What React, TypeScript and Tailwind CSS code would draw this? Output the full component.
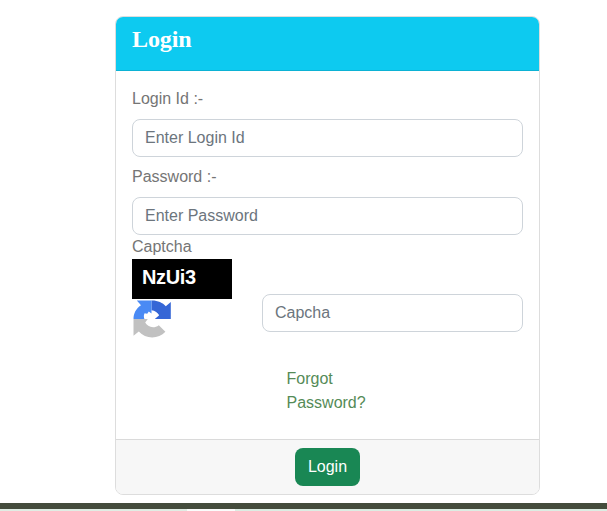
import { useState } from "react";
import type { FormEvent } from "react";

const inputClass =
  "block h-[38px] w-full rounded-lg border border-[#ced4da] bg-white px-3 text-base text-[#212529] placeholder:text-[#6c757d] placeholder:opacity-100 focus:outline-none focus:border-[#86b7fe]";

function RefreshIcon() {
  return (
    <svg width="40" height="40" viewBox="0 0 40 40" aria-hidden="true">
      {/* Right arrow */}
      <path
        d="M19.5 1.5C25.5 1.3 30.5 3.6 33.8 7.2L38.8 3V20H22.8L27.2 16.2C25.8 13.6 23 11.6 19.5 11.2Z"
        fill="#3566d6"
      />
      {/* Left arrow */}
      <path
        d="M4.8 1.5H19.5V14.5L16.8 12.6L15.2 14.8L12.6 14.2C11.6 16 11.7 18 12.4 20H1.5C1.5 14.6 3.9 9.7 9 6.3Z"
        fill="#4a8af4"
      />
      {/* Bottom arrow */}
      <path
        d="M1.5 20H15.8L13.2 23.6C15.2 27.6 21.4 30.2 26.8 26.2L33.4 32.8C26.4 40.4 13.6 40.3 6.8 32.6L1.5 36.8Z"
        fill="#c1c1c1"
      />
    </svg>
  );
}

export default function App() {
  const [loginId, setLoginId] = useState("");
  const [password, setPassword] = useState("");
  const [captcha, setCaptcha] = useState("");

  const handleSubmit = (e: FormEvent) => {
    e.preventDefault();
  };

  return (
    <div className="flex h-screen flex-col overflow-hidden bg-white pt-4 font-['Liberation_Sans',Arial,sans-serif] text-base text-[#757575]">
      <form
        onSubmit={handleSubmit}
        className="ml-[115px] w-[425px] shrink-0 overflow-hidden rounded-lg border border-[#dddddd] bg-white"
      >
        {/* Header */}
        <div className="h-[54px] border-b border-[#0cb2d4] bg-[#0dcaf0] px-4 pt-2">
          <h4 className="font-['Liberation_Serif','Times_New_Roman',serif] text-2xl leading-[29px] font-bold tracking-[-0.1px] text-white">
            Login
          </h4>
        </div>

        {/* Body */}
        <div className="h-[368px] p-4">
          <label htmlFor="loginId" className="mb-2 block">
            Login Id :-
          </label>
          <input
            id="loginId"
            type="text"
            placeholder="Enter Login Id"
            value={loginId}
            onChange={(e) => setLoginId(e.target.value)}
            className={inputClass}
          />
          <label htmlFor="password" className="mt-2 mb-2 block">
            Password :-
          </label>
          <input
            id="password"
            type="password"
            placeholder="Enter Password"
            value={password}
            onChange={(e) => setPassword(e.target.value)}
            className={inputClass}
          />

          <div className="flex">
            <div className="w-[130px] shrink-0">
              <label htmlFor="captcha" className="block">
                Captcha
              </label>
              <div className="h-10 w-[100px] bg-black pl-[10px] text-[20px] leading-[36px] font-bold tracking-[-0.35px] text-white">
                NzUi3
              </div>
              <button type="button" aria-label="Refresh captcha" className="block">
                <RefreshIcon />
              </button>
            </div>
            <div className="flex-1 pt-[59px]">
              <input
                id="captcha"
                type="text"
                placeholder="Capcha"
                value={captcha}
                onChange={(e) => setCaptcha(e.target.value)}
                className={inputClass}
              />
            </div>
          </div>

          <a href="#" className="mt-7 ml-[154.5px] block w-[90px] text-[#558b57]">
            Forgot Password?
          </a>
        </div>

        {/* Footer */}
        <div className="flex justify-center border-t border-[#dadada] bg-[#f7f7f7] py-2">
          <button
            type="submit"
            className="h-[38px] w-[65px] rounded-lg bg-[#198754] text-white"
          >
            Login
          </button>
        </div>
      </form>

      {/* Page footer */}
      <div className="mt-2 h-1.5 shrink-0 bg-[#444c3c]" />
      <div className="flex h-0.5 shrink-0">
        <div className="w-[187px] bg-[#e0ede4]" />
        <div className="w-12 bg-[#fafcfb]" />
        <div className="flex-1 bg-[#dcede3]" />
      </div>
    </div>
  );
}
